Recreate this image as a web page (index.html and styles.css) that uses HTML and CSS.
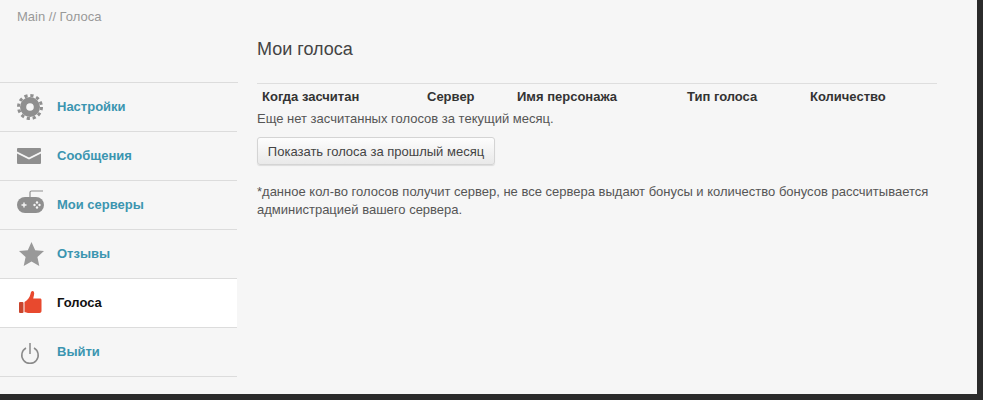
FILE: index.html
```html
<!DOCTYPE html>
<html lang="ru">
<head>
    <meta charset="UTF-8">
    <title>Мои голоса</title>
    <link rel="stylesheet" href="styles.css">
</head>
<body>
<div class="page">
    <div class="breadcrumb">Main // Голоса</div>
    <div class="layout">
        <ul class="menu">
            <li class="menu-item">
                <svg class="icon" viewBox="0 0 30 30">
                    <circle cx="14" cy="15" r="10" fill="#8f8f8f"/>
                    <circle cx="14" cy="15" r="11.500" fill="none" stroke="#8f8f8f" stroke-width="3" stroke-dasharray="3.200 2.820"/>
                    <circle cx="14" cy="15" r="3.800" fill="#f6f6f6"/>
                </svg>
                <a href="#">Настройки</a>
            </li>
            <li class="menu-item">
                <svg class="icon" viewBox="0 0 30 30">
                    <path d="M1 8q0-1 1-1h22q1 0 1 1v2.500l-12 6-12-6z" fill="#8f8f8f"/>
                    <path d="M1 12.500l12 6 12-6v9.500q0 1-1 1h-22q-1 0-1-1z" fill="#8f8f8f"/>
                </svg>
                <a href="#">Сообщения</a>
            </li>
            <li class="menu-item">
                <svg class="icon" viewBox="0 0 30 30">
                    <path d="M14 7.500v-5q0-1.500 1.500-1.500h11.500" fill="none" stroke="#8f8f8f" stroke-width="1.200"/>
                    <rect x="1" y="7" width="27" height="16" rx="8" fill="#8f8f8f"/>
                    <path d="M5.500 15h5M8 12.500v5" stroke="#f6f6f6" stroke-width="1.400"/>
                    <g fill="#f6f6f6">
                        <circle cx="21" cy="12.500" r="1.200"/>
                        <circle cx="21" cy="17.500" r="1.200"/>
                        <circle cx="18.500" cy="15" r="1.200"/>
                        <circle cx="23.500" cy="15" r="1.200"/>
                    </g>
                </svg>
                <a href="#">Мои серверы</a>
            </li>
            <li class="menu-item">
                <svg class="icon" viewBox="0 0 30 30">
                    <path d="M15.500 3l3.700 8.200 8.800.9-6.600 5.900 1.900 9-7.800-4.600-7.800 4.600 1.900-9-6.600-5.900 8.800-.9z" fill="#999"/>
                </svg>
                <a href="#">Отзывы</a>
            </li>
            <li class="menu-item active">
                <svg class="icon" viewBox="0 0 30 30">
                    <rect x="3" y="14" width="4.500" height="11" rx="1" fill="#c9442c"/>
                    <path d="M8.500 14c3-2 5-4 6-8 .3-2 1-3 2-3 1.500 0 2 2 1.500 4l-.8 3.500H24c1 0 1.500.7 1.500 1.500V23c0 1.200-.8 2-2 2H12c-1.500 0-2-.7-3.500-.7z" fill="#e8492e"/>
                </svg>
                <a href="#">Голоса</a>
            </li>
            <li class="menu-item">
                <svg class="icon" viewBox="0 0 30 30">
                    <path d="M10 11a8.200 8.200 0 1 0 8 0" fill="none" stroke="#8a8a8a" stroke-width="1.500"/>
                    <path d="M14 6v11" stroke="#8a8a8a" stroke-width="1.500"/>
                </svg>
                <a href="#">Выйти</a>
            </li>
        </ul>
        <div class="content">
            <h1>Мои голоса</h1>
            <table class="votes">
                <thead>
                <tr>
                    <th class="col-date">Когда засчитан</th>
                    <th class="col-server">Сервер</th>
                    <th class="col-name">Имя персонажа</th>
                    <th class="col-type">Тип голоса</th>
                    <th>Количество</th>
                </tr>
                </thead>
            </table>
            <p class="empty">Еще нет засчитанных голосов за текущий месяц.</p>
            <button class="btn" type="button">Показать голоса за прошлый месяц</button>
            <p class="note">*данное кол-во голосов получит сервер, не все сервера выдают бонусы и количество бонусов рассчитывается администрацией вашего сервера.</p>
        </div>
    </div>
</div>
</body>
</html>
```

FILE: styles.css
```css
* {
    margin: 0;
    padding: 0;
    box-sizing: border-box;
}

html, body {
    height: 400px;
    overflow: hidden;
}

body {
    background: #2b2b2b;
    font-family: "Liberation Sans", Arial, sans-serif;
    font-size: 13px;
    color: #555;
}

.page {
    width: 977px;
    height: 394px;
    background: #f6f6f6;
}

.breadcrumb {
    height: 33px;
    padding: 9px 0 0 17px;
    color: #999;
    font-size: 13px;
    line-height: 15px;
}

.layout {
    display: flex;
}

.menu {
    width: 238px;
    margin-top: 49px;
    list-style: none;
    border-top: 1px solid #dcdcdc;
}

.menu-item {
    display: flex;
    align-items: center;
    width: 237px;
    height: 49px;
    padding-left: 16px;
    border-bottom: 1px solid #dcdcdc;
}

.menu-item.active {
    background: #fff;
}

.menu-item a {
    margin: 0 0 2px 11px;
    color: #3b95b0;
    font-size: 13px;
    font-weight: bold;
    text-decoration: none;
}

.menu-item.active a {
    color: #111;
}

.icon {
    width: 30px;
    height: 30px;
    flex: none;
}

.content {
    flex: 1;
    padding: 0 40px 0 19px;
}

h1 {
    height: 51px;
    padding-top: 6px;
    border-bottom: 1px solid #dedede;
    color: #444;
    font-size: 18px;
    font-weight: normal;
    line-height: 21px;
}

.votes {
    width: 100%;
    border-collapse: collapse;
    table-layout: fixed;
}

.votes th {
    height: 25px;
    padding-left: 5px;
    color: #333;
    font-size: 13px;
    text-align: left;
}

.col-date {
    width: 165px;
}

.col-server {
    width: 90px;
}

.col-name {
    width: 170px;
}

.col-type {
    width: 123px;
}

.empty {
    line-height: 15px;
    margin-top: 2px;
}

.btn {
    display: block;
    width: 238px;
    height: 28px;
    margin-top: 11px;
    border: 1px solid #d4d4d4;
    border-radius: 3px;
    background: linear-gradient(#fdfdfd, #e9e9e9);
    box-shadow: 0 1px 1px rgba(0, 0, 0, 0.1);
    color: #444;
    font-family: inherit;
    font-size: 13px;
}

.note {
    margin-top: 18px;
    line-height: 18px;
}
```
